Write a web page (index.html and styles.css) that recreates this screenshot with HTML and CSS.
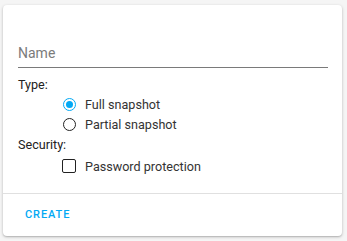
FILE: index.html
```html
<!DOCTYPE html>
<html>
<head>
<meta charset="utf-8">
<link rel="stylesheet" href="styles.css">
</head>
<body>
<div class="card">
  <div class="content">
    <div class="field">
      <input class="input" type="text" placeholder="Name">
    </div>
    <div class="group-label">Type:</div>
    <div class="options">
      <label class="option">
        <span class="radio checked"><span class="dot"></span></span>
        <span class="opt-text">Full snapshot</span>
      </label>
      <label class="option">
        <span class="radio"></span>
        <span class="opt-text">Partial snapshot</span>
      </label>
    </div>
    <div class="group-label tight">Security:</div>
    <div class="options spaced">
      <label class="option">
        <span class="checkbox"></span>
        <span class="opt-text">Password protection</span>
      </label>
    </div>
  </div>
  <div class="actions">
    <button class="btn">CREATE</button>
  </div>
</div>
</body>
</html>
```
FILE: styles.css
```css
html, body {
  margin: 0;
  padding: 0;
  background: #f5f5f5;
  font-family: Roboto, "Noto Sans", sans-serif;
}
body {
  padding: 5px 5px 6px 3px;
}
.card {
  background: #fff;
  border-radius: 4px;
  box-shadow: 0 1px 3px rgba(0,0,0,0.25), 0 1px 1px rgba(0,0,0,0.08);
  width: 339px;
}
.content {
  padding: 38px 14px 17px 15px;
}
.field {
  border-bottom: 1px solid #7a7a7a;
  padding-bottom: 4px;
}
.input {
  border: none;
  outline: none;
  padding: 0;
  font-family: inherit;
  font-size: 14px;
  color: #212121;
  width: 100%;
  height: 20px;
  background: transparent;
}
.input::placeholder {
  color: #7b7b7b;
}
.group-label {
  font-size: 12.6px;
  color: #212121;
  margin-top: 8px;
  line-height: 18px;
}
.group-label.tight {
  margin-top: 2px;
}
.options {
  padding-left: 44px;
}
.options.spaced {
  margin-top: 2px;
}
.option {
  display: flex;
  align-items: center;
  height: 20px;
  gap: 9px;
  font-size: 12.6px;
  color: #333;
}
.radio {
  width: 11px;
  height: 11px;
  border: 1.5px solid #222;
  border-radius: 50%;
  display: flex;
  align-items: center;
  justify-content: center;
  box-sizing: content-box;
  margin-left: 1px;
}
.radio.checked {
  border-color: #03a9f4;
}
.dot {
  width: 7px;
  height: 7px;
  border-radius: 50%;
  background: #03a9f4;
}
.checkbox {
  width: 12px;
  height: 12px;
  border: 1.5px solid #222;
  border-radius: 2px;
  box-sizing: content-box;
}
.actions {
  border-top: 1px solid #e0e0e0;
  padding: 8px 8px 9px;
}
.btn {
  background: none;
  border: none;
  font-family: inherit;
  font-size: 11px;
  font-weight: 500;
  letter-spacing: 0.9px;
  color: #03a9f4;
  padding: 6px 14px;
  display: block;
}
```
